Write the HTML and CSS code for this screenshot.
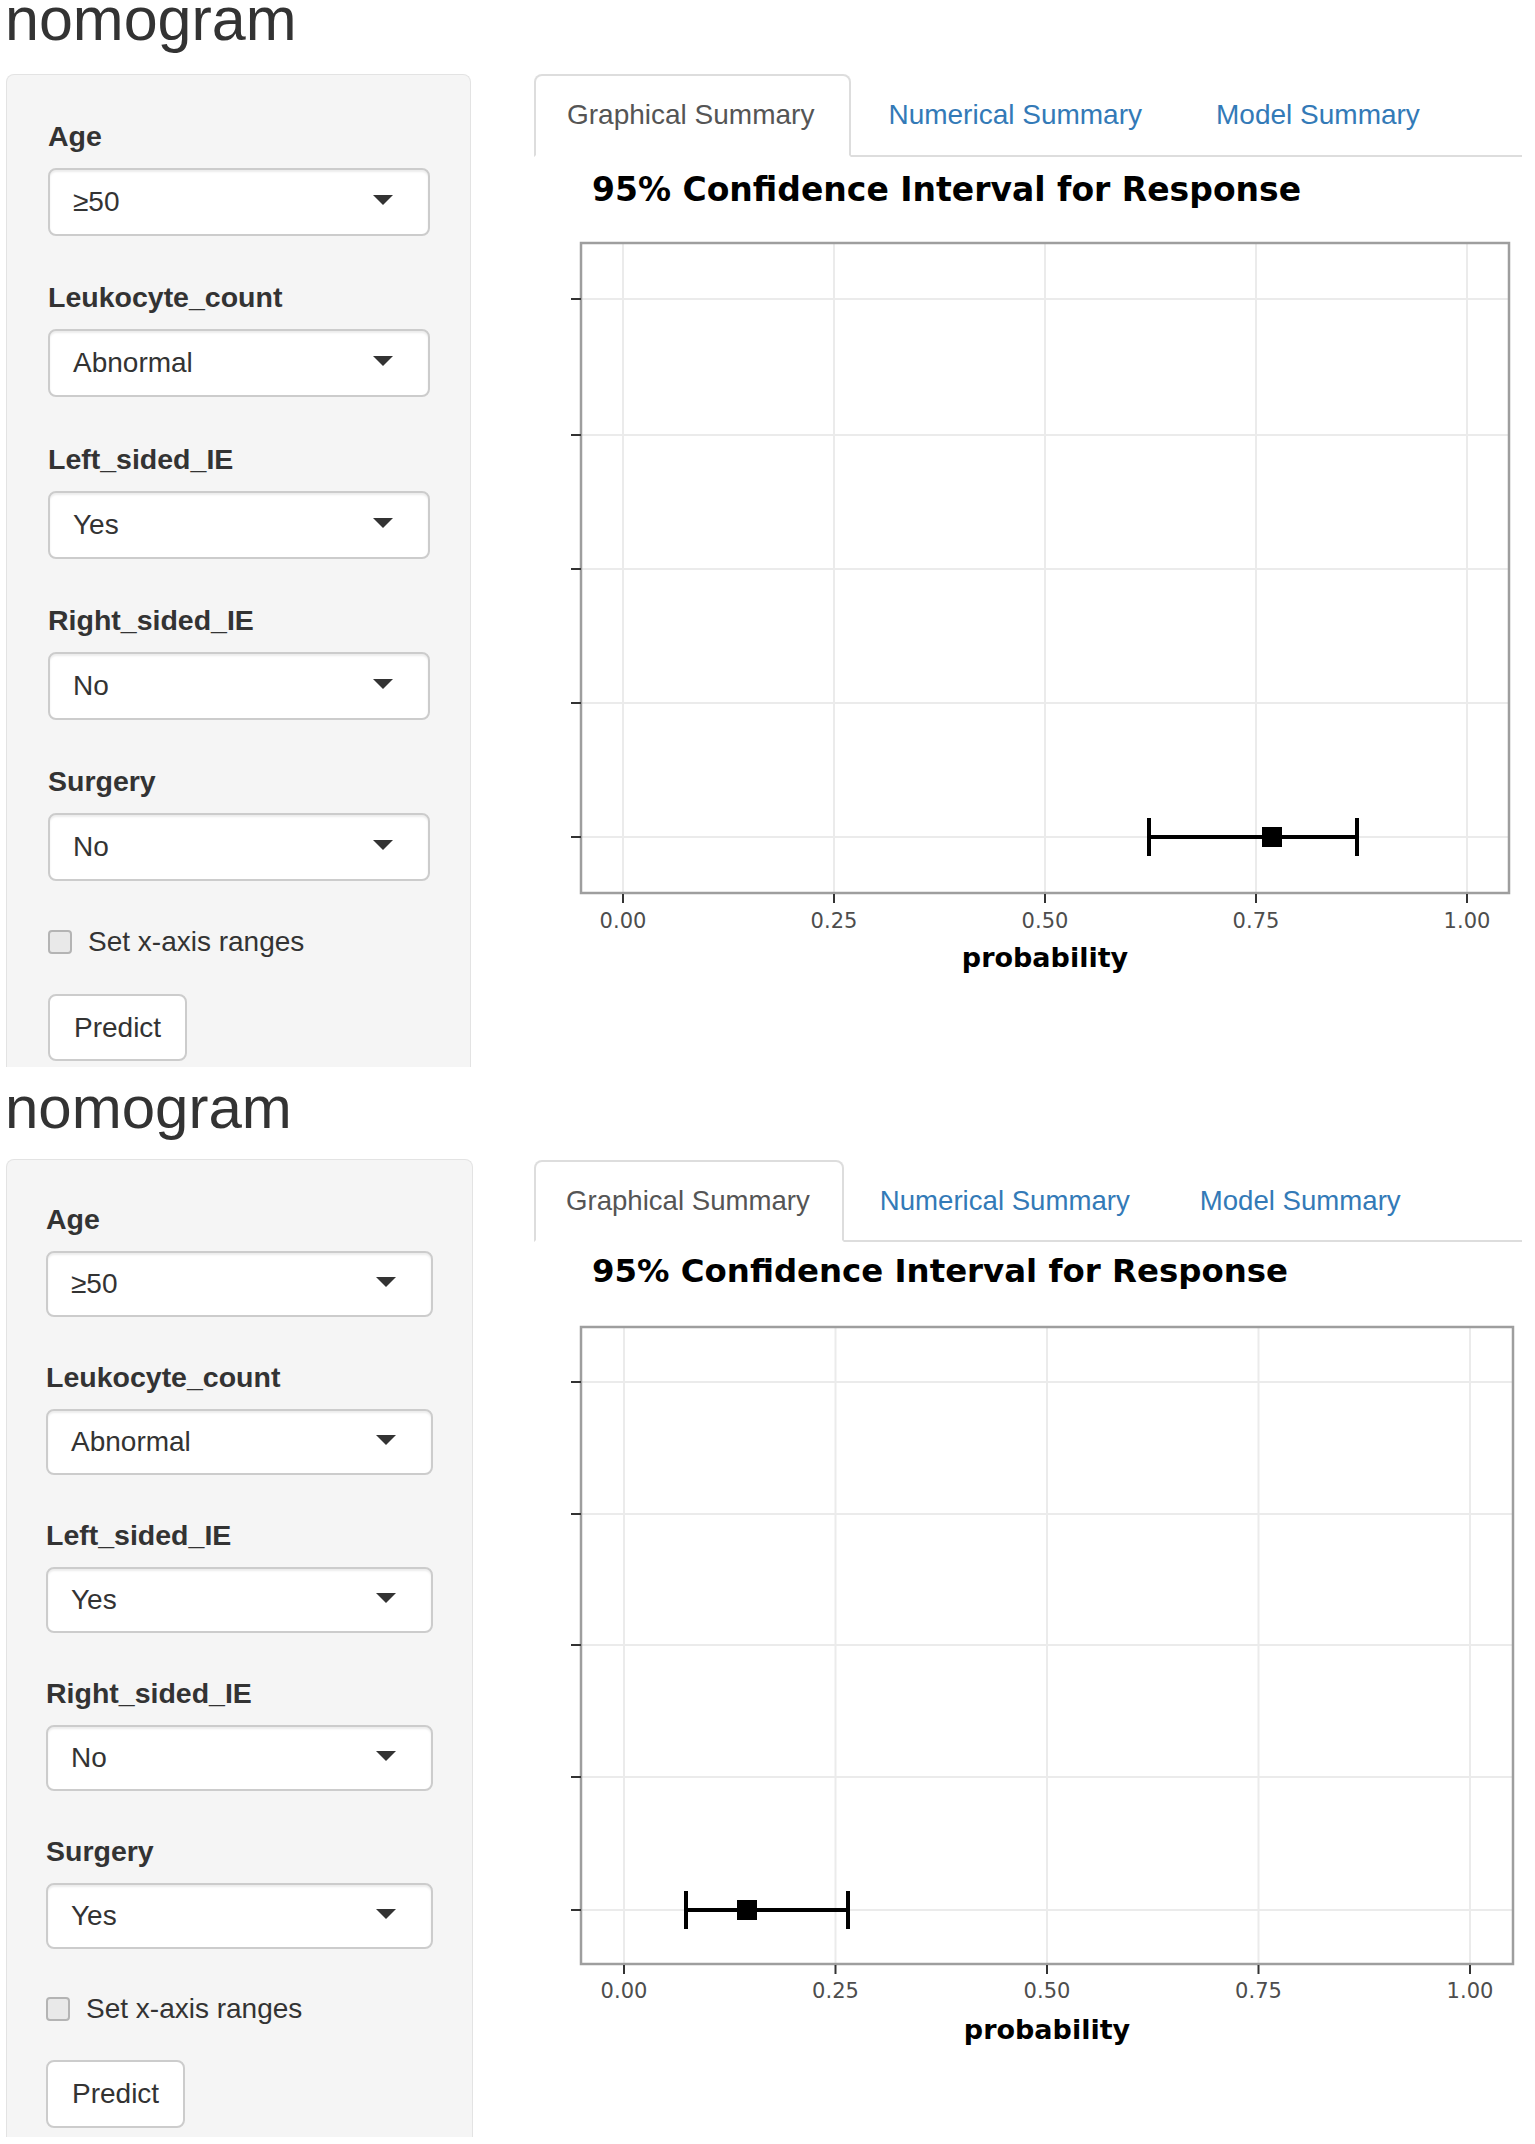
FILE: index.html
```html
<!DOCTYPE html>
<html>
<head>
<meta charset="utf-8">
<title>nomogram</title>
<link rel="stylesheet" href="styles.css">
</head>
<body>

<div class="app app-a">
  <h2 class="title">nomogram</h2>
  <div class="layout">
    <aside class="well">
      <div class="form-group">
        <label class="control-label">Age</label>
        <div class="select"><span class="select-value">≥50</span><span class="caret"></span></div>
      </div>
      <div class="form-group">
        <label class="control-label">Leukocyte_count</label>
        <div class="select"><span class="select-value">Abnormal</span><span class="caret"></span></div>
      </div>
      <div class="form-group">
        <label class="control-label">Left_sided_IE</label>
        <div class="select"><span class="select-value">Yes</span><span class="caret"></span></div>
      </div>
      <div class="form-group">
        <label class="control-label">Right_sided_IE</label>
        <div class="select"><span class="select-value">No</span><span class="caret"></span></div>
      </div>
      <div class="form-group">
        <label class="control-label">Surgery</label>
        <div class="select"><span class="select-value">No</span><span class="caret"></span></div>
      </div>
      <div class="checkbox"><span class="box"></span><span class="checkbox-label">Set x-axis ranges</span></div>
      <button class="btn" type="button">Predict</button>
    </aside>
    <main class="main">
      <ul class="nav-tabs">
        <li class="active"><a>Graphical Summary</a></li>
        <li><a>Numerical Summary</a></li>
        <li><a>Model Summary</a></li>
      </ul>
      <h3 class="plot-title">95% Confidence Interval for Response</h3>
      <svg class="plot" width="960" height="760" viewBox="0 0 960 760">
        <rect class="panel-bg" x="21" y="13" width="928" height="650"/>
        <line class="grid" x1="63" y1="13" x2="63" y2="663"/>
        <line class="grid" x1="274" y1="13" x2="274" y2="663"/>
        <line class="grid" x1="485" y1="13" x2="485" y2="663"/>
        <line class="grid" x1="696" y1="13" x2="696" y2="663"/>
        <line class="grid" x1="907" y1="13" x2="907" y2="663"/>
        <line class="grid" x1="21" y1="69" x2="949" y2="69"/>
        <line class="grid" x1="21" y1="205" x2="949" y2="205"/>
        <line class="grid" x1="21" y1="339" x2="949" y2="339"/>
        <line class="grid" x1="21" y1="473" x2="949" y2="473"/>
        <line class="grid" x1="21" y1="607" x2="949" y2="607"/>
        <rect class="panel-border" x="21" y="13" width="928" height="650"/>
        <line class="tick" x1="11" y1="69" x2="21" y2="69"/>
        <line class="tick" x1="11" y1="205" x2="21" y2="205"/>
        <line class="tick" x1="11" y1="339" x2="21" y2="339"/>
        <line class="tick" x1="11" y1="473" x2="21" y2="473"/>
        <line class="tick" x1="11" y1="607" x2="21" y2="607"/>
        <line class="tick" x1="63" y1="664" x2="63" y2="673"/>
        <line class="tick" x1="274" y1="664" x2="274" y2="673"/>
        <line class="tick" x1="485" y1="664" x2="485" y2="673"/>
        <line class="tick" x1="696" y1="664" x2="696" y2="673"/>
        <line class="tick" x1="907" y1="664" x2="907" y2="673"/>
        <text class="tick-label" x="63" y="698">0.00</text>
        <text class="tick-label" x="274" y="698">0.25</text>
        <text class="tick-label" x="485" y="698">0.50</text>
        <text class="tick-label" x="696" y="698">0.75</text>
        <text class="tick-label" x="907" y="698">1.00</text>
        <text class="axis-title" x="485" y="737">probability</text>
        <line class="err" x1="589" y1="607" x2="797" y2="607"/>
        <line class="err" x1="589" y1="588" x2="589" y2="626"/>
        <line class="err" x1="797" y1="588" x2="797" y2="626"/>
        <rect class="point" x="702" y="597" width="20" height="20"/>
      </svg>
    </main>
  </div>
</div>

<div class="app app-b">
  <h2 class="title">nomogram</h2>
  <div class="layout">
    <aside class="well">
      <div class="form-group">
        <label class="control-label">Age</label>
        <div class="select"><span class="select-value">≥50</span><span class="caret"></span></div>
      </div>
      <div class="form-group">
        <label class="control-label">Leukocyte_count</label>
        <div class="select"><span class="select-value">Abnormal</span><span class="caret"></span></div>
      </div>
      <div class="form-group">
        <label class="control-label">Left_sided_IE</label>
        <div class="select"><span class="select-value">Yes</span><span class="caret"></span></div>
      </div>
      <div class="form-group">
        <label class="control-label">Right_sided_IE</label>
        <div class="select"><span class="select-value">No</span><span class="caret"></span></div>
      </div>
      <div class="form-group">
        <label class="control-label">Surgery</label>
        <div class="select"><span class="select-value">Yes</span><span class="caret"></span></div>
      </div>
      <div class="checkbox"><span class="box"></span><span class="checkbox-label">Set x-axis ranges</span></div>
      <button class="btn" type="button">Predict</button>
    </aside>
    <main class="main">
      <ul class="nav-tabs">
        <li class="active"><a>Graphical Summary</a></li>
        <li><a>Numerical Summary</a></li>
        <li><a>Model Summary</a></li>
      </ul>
      <h3 class="plot-title">95% Confidence Interval for Response</h3>
      <svg class="plot" width="960" height="750" viewBox="0 0 960 750">
        <rect class="panel-bg" x="21" y="13" width="932" height="637"/>
        <line class="grid" x1="64" y1="13" x2="64" y2="650"/>
        <line class="grid" x1="275.5" y1="13" x2="275.5" y2="650"/>
        <line class="grid" x1="487" y1="13" x2="487" y2="650"/>
        <line class="grid" x1="698.5" y1="13" x2="698.5" y2="650"/>
        <line class="grid" x1="910" y1="13" x2="910" y2="650"/>
        <line class="grid" x1="21" y1="68" x2="953" y2="68"/>
        <line class="grid" x1="21" y1="200" x2="953" y2="200"/>
        <line class="grid" x1="21" y1="331" x2="953" y2="331"/>
        <line class="grid" x1="21" y1="463" x2="953" y2="463"/>
        <line class="grid" x1="21" y1="596" x2="953" y2="596"/>
        <rect class="panel-border" x="21" y="13" width="932" height="637"/>
        <line class="tick" x1="11" y1="68" x2="21" y2="68"/>
        <line class="tick" x1="11" y1="200" x2="21" y2="200"/>
        <line class="tick" x1="11" y1="331" x2="21" y2="331"/>
        <line class="tick" x1="11" y1="463" x2="21" y2="463"/>
        <line class="tick" x1="11" y1="596" x2="21" y2="596"/>
        <line class="tick" x1="64" y1="651" x2="64" y2="660"/>
        <line class="tick" x1="275.5" y1="651" x2="275.5" y2="660"/>
        <line class="tick" x1="487" y1="651" x2="487" y2="660"/>
        <line class="tick" x1="698.5" y1="651" x2="698.5" y2="660"/>
        <line class="tick" x1="910" y1="651" x2="910" y2="660"/>
        <text class="tick-label" x="64" y="684">0.00</text>
        <text class="tick-label" x="275.5" y="684">0.25</text>
        <text class="tick-label" x="487" y="684">0.50</text>
        <text class="tick-label" x="698.5" y="684">0.75</text>
        <text class="tick-label" x="910" y="684">1.00</text>
        <text class="axis-title" x="487" y="725">probability</text>
        <line class="err" x1="126" y1="596" x2="288" y2="596"/>
        <line class="err" x1="126" y1="577" x2="126" y2="615"/>
        <line class="err" x1="288" y1="577" x2="288" y2="615"/>
        <rect class="point" x="177" y="586" width="20" height="20"/>
      </svg>
    </main>
  </div>
</div>

</body>
</html>
```

FILE: styles.css
```css
* {
  box-sizing: border-box;
}

html,
body {
  margin: 0;
  padding: 0;
  background: #ffffff;
}

body {
  width: 1535px;
  overflow: hidden;
  font-family: "Liberation Sans", Arial, Helvetica, sans-serif;
  color: #333333;
}

/* ---------- page instance ---------- */
.app {
  padding-left: 6px;
  padding-right: 13px;
}

.title {
  margin: 0;
  font-weight: 400;
  font-size: 61px;
  line-height: 60px;
  color: #333333;
}

.app-a .title {
  margin-top: -11px;
  margin-bottom: 25px;
  margin-left: -1px;
}

.app-b {
  margin-top: 11px;
}

.app-b .title {
  font-size: 60px;
  margin-bottom: 21px;
  margin-left: -1px;
}

.layout {
  display: flex;
  align-items: flex-start;
}

.app-a .layout {
  gap: 63px;
}

.app-b .layout {
  gap: 61px;
}

/* ---------- sidebar well ---------- */
.well {
  flex: none;
  background: #f5f5f5;
  border: 1px solid #e3e3e3;
  border-bottom: 0;
  border-radius: 8px 8px 0 0;
}

.app-a .well {
  width: 465px;
  padding: 41px 40px 6px 41px;
}

.app-b .well {
  width: 467px;
  padding: 39px 39px 9px 39px;
}

.form-group .control-label {
  display: block;
  font-weight: 700;
  font-size: 28.5px;
  line-height: 40px;
  margin-bottom: 12px;
  color: #333333;
}

.app-a .form-group {
  margin-bottom: 41.3px;
}

.app-b .form-group {
  margin-bottom: 40px;
}

.select {
  display: flex;
  align-items: center;
  justify-content: space-between;
  background: #ffffff;
  border: 2px solid #cccccc;
  border-radius: 8px;
  padding: 0 35px 0 23px;
  font-size: 28px;
  line-height: 40px;
  color: #333333;
  box-shadow: inset 0 2px 2px rgba(0, 0, 0, 0.075);
}

.app-a .select {
  height: 68px;
}

.app-b .select {
  height: 66px;
}

.caret {
  width: 0;
  height: 0;
  margin-top: -4px;
  border-left: 10px solid transparent;
  border-right: 10px solid transparent;
  border-top: 10px solid #333333;
}

.checkbox {
  display: flex;
  align-items: center;
  font-size: 28px;
  line-height: 40px;
  color: #333333;
}

.app-a .checkbox {
  margin-bottom: 32px;
}

.app-b .checkbox {
  margin-bottom: 31px;
}

.box {
  flex: none;
  width: 24px;
  height: 24px;
  margin-right: 16px;
  background: #e9e9e9;
  border: 2px solid #b4b4b4;
  border-radius: 4px;
}

.btn {
  display: block;
  padding: 0 24px;
  background: #ffffff;
  border: 2px solid #cccccc;
  border-radius: 8px;
  font-family: "Liberation Sans", Arial, Helvetica, sans-serif;
  font-size: 28px;
  line-height: 40px;
  color: #333333;
}

.app-a .btn {
  height: 67px;
}

.app-b .btn {
  height: 68px;
}

/* ---------- main panel ---------- */
.main {
  flex: 1;
  min-width: 0;
}

.app-b .main {
  margin-top: 1px;
}

.nav-tabs {
  display: flex;
  list-style: none;
  margin: 0;
  padding: 0;
  border-bottom: 2px solid #dddddd;
}

.nav-tabs li {
  margin-right: 4px;
  margin-bottom: -2px;
}

.nav-tabs a {
  display: block;
  padding: 19px 35px 20px 31px;
  border: 2px solid transparent;
  border-radius: 8px 8px 0 0;
  font-size: 28px;
  line-height: 40px;
  color: #337ab7;
  white-space: nowrap;
}

.app-b .nav-tabs a {
  font-size: 27.6px;
  line-height: 39px;
  padding: 19px 32px 20px 30px;
}

.nav-tabs li.active a {
  color: #555555;
  background: #ffffff;
  border-color: #dddddd;
  border-bottom-color: transparent;
}

.plot-title {
  margin: 0 0 0 58px;
  font-family: "DejaVu Sans", Verdana, sans-serif;
  font-weight: 700;
  font-size: 33px;
  line-height: 40px;
  color: #000000;
  white-space: nowrap;
}

.app-a .plot-title {
  margin-top: 13px;
}

.app-b .plot-title {
  margin-top: 9px;
  margin-left: 58px;
  font-size: 32.4px;
}

.plot {
  display: block;
  margin-left: 26px;
}

.app-a .plot {
  margin-top: 20px;
}

.app-b .plot {
  margin-top: 23px;
}

/* ---------- plot drawing ---------- */
.panel-bg {
  fill: #ffffff;
}

.grid {
  stroke: #ebebeb;
  stroke-width: 2;
}

.panel-border {
  fill: none;
  stroke: #9e9e9e;
  stroke-width: 2.5;
}

.tick {
  stroke: #333333;
  stroke-width: 2;
}

.tick-label {
  font-family: "DejaVu Sans", Verdana, sans-serif;
  font-size: 21px;
  fill: #4d4d4d;
  text-anchor: middle;
}

.axis-title {
  font-family: "DejaVu Sans", Verdana, sans-serif;
  font-weight: 700;
  font-size: 27px;
  fill: #000000;
  text-anchor: middle;
}

.err {
  stroke: #000000;
  stroke-width: 4;
}

.point {
  fill: #000000;
}
```
